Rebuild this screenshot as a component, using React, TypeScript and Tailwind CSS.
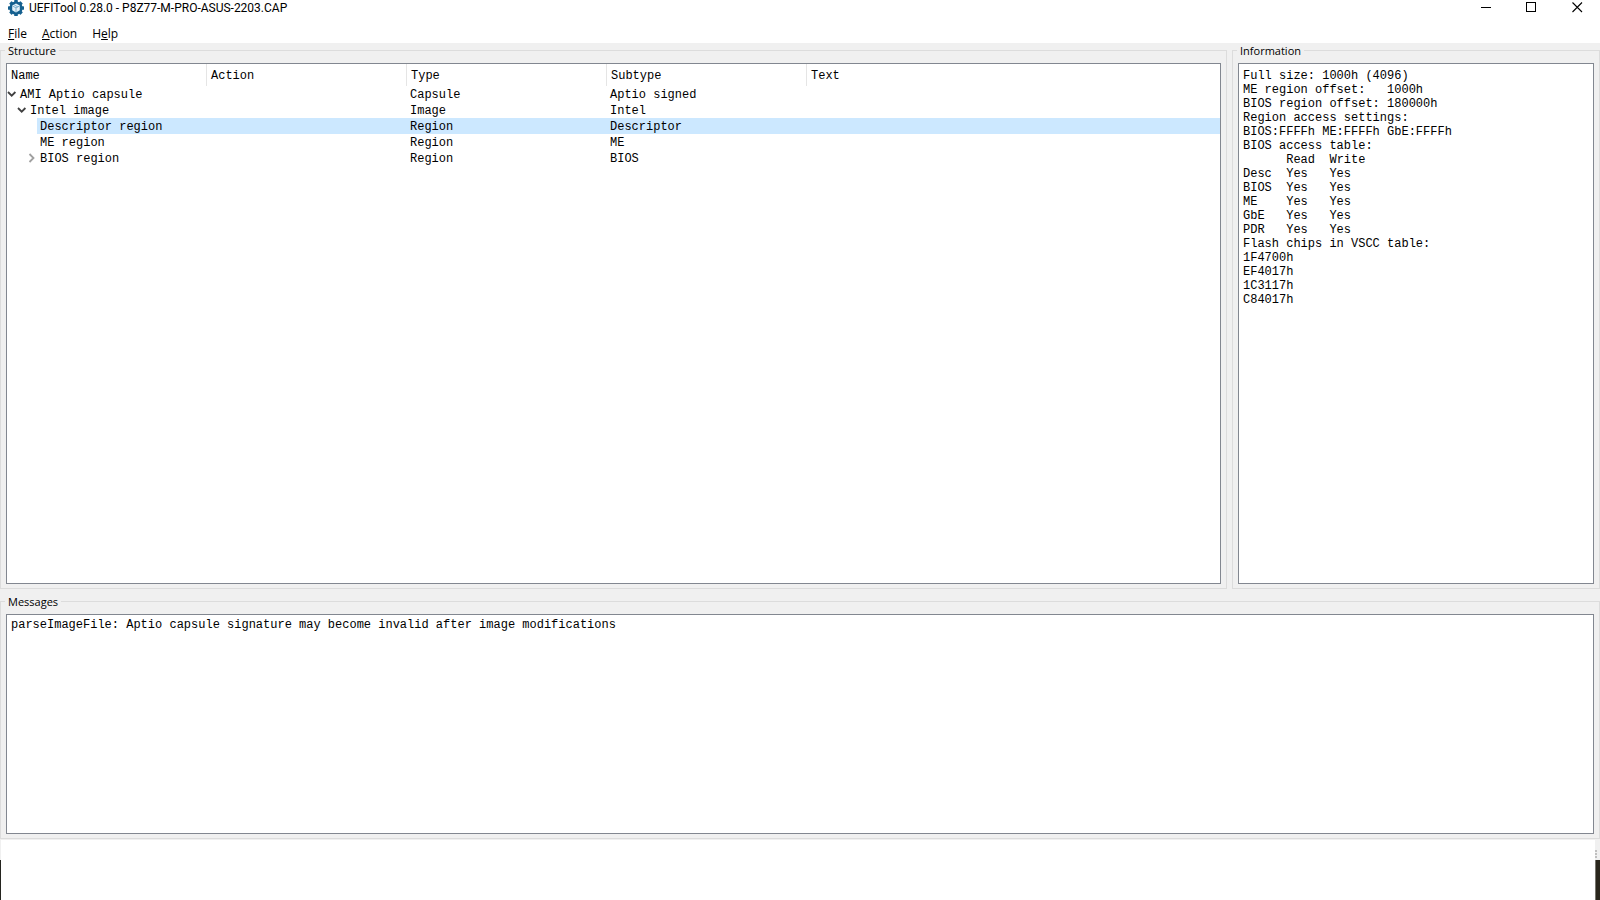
import React, { useState } from "react";

type Row = {
  name: string;
  type: string;
  subtype: string;
  level: 0 | 1 | 2;
  state: "open" | "closed" | "leaf";
};

const rows: Row[] = [
  { name: "AMI Aptio capsule", type: "Capsule", subtype: "Aptio signed", level: 0, state: "open" },
  { name: "Intel image", type: "Image", subtype: "Intel", level: 1, state: "open" },
  { name: "Descriptor region", type: "Region", subtype: "Descriptor", level: 2, state: "leaf" },
  { name: "ME region", type: "Region", subtype: "ME", level: 2, state: "leaf" },
  { name: "BIOS region", type: "Region", subtype: "BIOS", level: 2, state: "closed" },
];

const indent = { 0: "pl-0", 1: "pl-[10px]", 2: "pl-[20px]" };

const information = `Full size: 1000h (4096)
ME region offset:   1000h
BIOS region offset: 180000h
Region access settings:
BIOS:FFFFh ME:FFFFh GbE:FFFFh
BIOS access table:
      Read  Write
Desc  Yes   Yes
BIOS  Yes   Yes
ME    Yes   Yes
GbE   Yes   Yes
PDR   Yes   Yes
Flash chips in VSCC table:
1F4700h
EF4017h
1C3117h
C84017h`;

const mono = "font-['Liberation_Mono',monospace] text-[12px]";

function AppIcon() {
  return (
    <svg width="16" height="16" viewBox="0 0 16 16" aria-hidden="true">
      <g fill="#15608f">
        <circle cx="8" cy="8" r="6.6" />
        {[0, 45, 90, 135, 180, 225, 270, 315].map((a) => (
          <rect key={a} x="6.2" y="0" width="3.6" height="4" rx="0.6" transform={`rotate(${a} 8 8)`} />
        ))}
      </g>
      <path d="M8 3.6 11.8 5.6v4.7L8 12.4 4.2 10.3V5.6z" fill="#e4f1f8" />
      <path d="M4.4 5.9 8 7.9l3.6-2M8 7.9v4.3M6.2 4.9l3.6 2" fill="none" stroke="#3d87b3" strokeWidth="0.6" />
    </svg>
  );
}

function Chevron({ open }: { open: boolean }) {
  return (
    <svg width="10" height="10" viewBox="0 0 10 10" fill="none" aria-hidden="true">
      {open ? (
        <path d="M1 3l3.7 3.7L8.4 3" stroke="#404040" strokeWidth="1.8" />
      ) : (
        <path d="M2.5 1l4 4-4 4" stroke="#a0a0a0" strokeWidth="1.8" />
      )}
    </svg>
  );
}

function Group({ title, className, children }: { title: string; className: string; children: React.ReactNode }) {
  return (
    <fieldset className={`flex min-h-0 min-w-0 flex-col border border-[#dcdcdc] px-[5px] pt-[5px] pb-1 ${className}`}>
      <legend className="-ml-px h-[15px] pr-[3px] pl-[3px] text-[11px] leading-[15px]">{title}</legend>
      {children}
    </fieldset>
  );
}

export default function App() {
  const [selected, setSelected] = useState(2);
  return (
    <div className="flex h-screen flex-col bg-white font-['Open_Sans','Noto_Sans',sans-serif] text-[12px] text-black">
      <header className="flex h-[15px] shrink-0 items-center pl-2">
        <AppIcon />
        <h1 className="ml-[5px] font-['Roboto',sans-serif] text-[12px] leading-[16px]">UEFITool 0.28.0 - P8Z77-M-PRO-ASUS-2203.CAP</h1>
        <div className="ml-auto flex">
          <button aria-label="Minimize" className="flex h-[15px] w-[45px] items-center justify-center">
            <svg width="11" height="11" viewBox="0 0 11 11" shapeRendering="crispEdges"><path d="M0 5.5h10" stroke="#000" /></svg>
          </button>
          <button aria-label="Maximize" className="flex h-[15px] w-[45px] items-center justify-center">
            <svg width="11" height="11" viewBox="0 0 11 11" fill="none" shapeRendering="crispEdges"><path d="M.5.5h9v9h-9z" stroke="#000" /></svg>
          </button>
          <button aria-label="Close" className="flex h-[15px] w-[46px] items-center justify-center">
            <svg width="11" height="11" viewBox="0 0 11 11"><path d="M.5.5l9.5 9.5M10 .5L.5 10" stroke="#000" strokeWidth="1.1" /></svg>
          </button>
        </div>
      </header>

      <nav className="flex h-7 shrink-0 items-end gap-[15px] px-2 pb-px leading-[17px]">
        <button><u>F</u>ile</button>
        <button><u>A</u>ction</button>
        <button>H<u>e</u>lp</button>
      </nav>

      <main className="flex min-h-0 flex-1 flex-col gap-[5px] bg-[#f0f0f0] pb-px">
        <div className="flex min-h-0 flex-[545] gap-[5px]">
          <Group title="Structure" className="flex-[1215]">
            <div className="min-h-0 flex-1 overflow-hidden border border-[#828790] bg-white">
              <table className={`w-full table-fixed border-collapse leading-[14px] ${mono}`}>
                <colgroup>
                  <col className="w-[200px]" />
                  <col className="w-[200px]" />
                  <col className="w-[200px]" />
                  <col className="w-[200px]" />
                  <col />
                </colgroup>
                <thead>
                  <tr className="h-[22px]">
                    {["Name", "Action", "Type", "Subtype", "Text"].map((h) => (
                      <th key={h} className="p-0 text-left font-normal">
                        <div className={h === "Text" ? "h-[22px] pt-0.5 pl-1 leading-[20px]" : "h-[22px] border-r border-[#e5e5e5] pt-0.5 pl-1 leading-[20px]"}>{h}</div>
                      </th>
                    ))}
                  </tr>
                </thead>
                <tbody>
                  {rows.map((r, i) => {
                    const tint = i === selected ? "bg-[#cce8ff]" : "";
                    return (
                      <tr key={r.name} className="h-4" onClick={() => setSelected(i)}>
                        <td className="p-0">
                          <div className={`flex ${indent[r.level]}`}>
                            {r.state === "leaf" ? (
                              <span className="w-[10px]" />
                            ) : (
                              <button aria-label={`Toggle ${r.name}`} className="flex h-4 w-[10px] items-center">
                                <Chevron open={r.state === "open"} />
                              </button>
                            )}
                            <span className={`h-4 flex-1 pt-0.5 pl-[3px] leading-[14px] ${tint}`}>{r.name}</span>
                          </div>
                        </td>
                        <td className={`p-0 ${tint}`} />
                        <td className={`p-0 pt-0.5 pl-[3px] leading-[14px] ${tint}`}>{r.type}</td>
                        <td className={`p-0 pt-0.5 pl-[3px] leading-[14px] ${tint}`}>{r.subtype}</td>
                        <td className={`p-0 ${tint}`} />
                      </tr>
                    );
                  })}
                </tbody>
              </table>
            </div>
          </Group>
          <Group title="Information" className="flex-[356]">
            <textarea
              readOnly
              aria-label="Information"
              value={information}
              className={`min-h-0 w-full flex-1 resize-none border border-[#828790] bg-white px-1 pt-[5px] leading-[14px] outline-none ${mono}`}
            />
          </Group>
        </div>
        <Group title="Messages" className="flex-[233]">
          <ul aria-label="Messages" className={`min-h-0 flex-1 overflow-hidden border border-[#828790] bg-white px-1 pt-[3px] leading-[14px] ${mono}`}>
            <li>parseImageFile: Aptio capsule signature may become invalid after image modifications</li>
          </ul>
        </Group>
      </main>

      <footer className="flex h-5 shrink-0 items-end justify-end border-l border-[#f0f0f0]">
        <div className="flex h-full w-[5px] flex-col justify-end gap-px bg-[#f0f0f0] pb-0.5">
          <i className="size-[2px] bg-[#bfbfbf]" />
          <i className="size-[2px] bg-[#bfbfbf]" />
          <i className="size-[2px] bg-[#bfbfbf]" />
        </div>
      </footer>
      <div className="flex h-10 shrink-0 justify-between">
        <div className="w-px bg-[#24241f]" />
        <div className="w-[5px] border-l border-[#77756e] bg-[#29261c]" />
      </div>
    </div>
  );
}
